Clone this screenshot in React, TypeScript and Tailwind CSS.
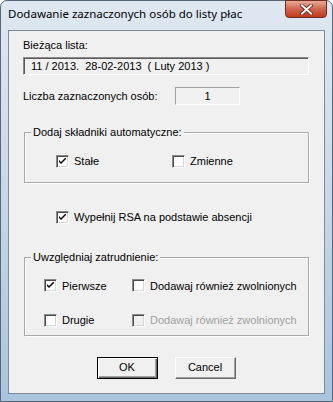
import React from "react"

function Check({ checked, disabled }: { checked?: boolean; disabled?: boolean }) {
    return (
        <span
            className={`w-[13px] h-[13px] shrink-0 border border-t-[#8a8a8a] border-l-[#8a8a8a] border-b-white border-r-white shadow-[inset_1px_1px_0_#4a4a4a,inset_-1px_-1px_0_#d8d8d8] flex items-center justify-center ${
                disabled ? "bg-[#f0f0f0]" : "bg-white"
            }`}
        >
            {checked && (
                <svg width="7" height="7" viewBox="0 0 7 7">
                    <path d="M0 2 L0 4 L2 6 L7 1 L7 -1 L2 4 Z" fill="#000" />
                </svg>
            )}
        </span>
    )
}

function CheckRow({ label, checked, disabled }: { label: string; checked?: boolean; disabled?: boolean }) {
    return (
        <div className="flex items-center gap-[5px]">
            <Check checked={checked} disabled={disabled} />
            <span className={disabled ? "text-[#a0a0a0]" : "text-black"}>{label}</span>
        </div>
    )
}

function Group({ title, className, children }: { title: string; className: string; children: React.ReactNode }) {
    return (
        <div className={`relative border border-[#a8a8a8] shadow-[inset_1px_1px_0_#fff,1px_1px_0_#fff] ${className}`}>
            <span className="absolute left-[6px] -top-[7px] bg-[#f0f0f0] px-[2px] leading-[13px]">{title}</span>
            {children}
        </div>
    )
}

function Button({ label, def }: { label: string; def?: boolean }) {
    return (
        <button
            className={`w-[61px] h-[22px] bg-[#f0f0f0] flex items-center justify-center ${
                def
                    ? "border border-black shadow-[inset_1px_1px_0_#fff,inset_-1px_-1px_0_#696969,inset_-2px_-2px_0_#a0a0a0]"
                    : "border border-t-white border-l-white border-b-[#696969] border-r-[#696969] shadow-[inset_-1px_-1px_0_#a0a0a0]"
            }`}
        >
            {label}
        </button>
    )
}

export default function App() {
    return (
        <div className="w-[333px] h-[402px] bg-gradient-to-b from-[#dfe8f1] via-[#c7d7e7] to-[#a9c4de] border border-[#56677a] rounded-t-[7px] flex flex-col font-['Liberation_Sans',Arial,sans-serif] text-[11px] text-black">
            {/* Title bar */}
            <div className="h-[29px] flex items-start relative">
                <span className="ml-[7px] mt-[6px] font-['Noto_Sans',sans-serif] text-[11.5px] leading-[14px] text-black">
                    Dodawanie zaznaczonych osób do listy płac
                </span>
                <div className="absolute left-[284px] top-[-1px] w-[42px] h-[18px] rounded-b-[4px] border border-[#6e2b22] bg-gradient-to-b from-[#e7aa98] via-[#d0654c] to-[#c0391c] flex items-center justify-center">
                    <svg width="13" height="11" viewBox="0 0 13 11">
                        <path d="M2 1.5 L11 9.5 M11 1.5 L2 9.5" stroke="#5a2018" strokeWidth="3.6" strokeLinecap="square" />
                        <path d="M2 1.5 L11 9.5 M11 1.5 L2 9.5" stroke="#fff" strokeWidth="2" strokeLinecap="square" />
                    </svg>
                </div>
            </div>

            {/* Client area */}
            <div className="mx-[7px] h-[364px] border border-[#7d8a98] bg-[#f0f0f0] flex flex-col pl-[14px] pr-[15px]">
                <div className="mt-[8px] leading-[13px]">Bieżąca lista:</div>
                <div className="mt-[5px] h-[18px] border border-t-[#8a8a8a] border-l-[#8a8a8a] border-b-white border-r-white shadow-[inset_1px_1px_0_#5a5a5a] flex items-center pl-[7px]">
                    11 / 2013.&nbsp; 28-02-2013&nbsp; ( Luty 2013 )
                </div>

                <div className="mt-[12px] h-[18px] flex items-center">
                    <span className="w-[152px]">Liczba zaznaczonych osób:</span>
                    <div className="w-[65px] h-[18px] border border-t-[#a0a0a0] border-l-[#a0a0a0] border-b-white border-r-white flex items-center justify-center">
                        1
                    </div>
                </div>

                <Group title="Dodaj składniki automatyczne:" className="mt-[27px] h-[51px] ml-[1px] pt-[20px] pl-[31px]">
                    <div className="flex">
                        <div className="w-[116px]">
                            <CheckRow label="Stałe" checked />
                        </div>
                        <CheckRow label="Zmienne" />
                    </div>
                </Group>

                <div className="mt-[26px] ml-[33px]">
                    <CheckRow label="Wypełnij RSA na podstawie absencji" checked />
                </div>

                <Group title="Uwzględniaj zatrudnienie:" className="mt-[31px] h-[79px] ml-[1px] pt-[20px] pl-[19px] flex flex-col gap-[18px]">
                    <div className="flex">
                        <div className="w-[88px]">
                            <CheckRow label="Pierwsze" checked />
                        </div>
                        <CheckRow label="Dodawaj również zwolnionych" />
                    </div>
                    <div className="flex">
                        <div className="w-[88px]">
                            <CheckRow label="Drugie" />
                        </div>
                        <CheckRow label="Dodawaj również zwolnionych" disabled />
                    </div>
                </Group>

                <div className="mt-[21px] flex justify-center gap-[17px]">
                    <Button label="OK" def />
                    <Button label="Cancel" />
                </div>
            </div>
        </div>
    )
}
